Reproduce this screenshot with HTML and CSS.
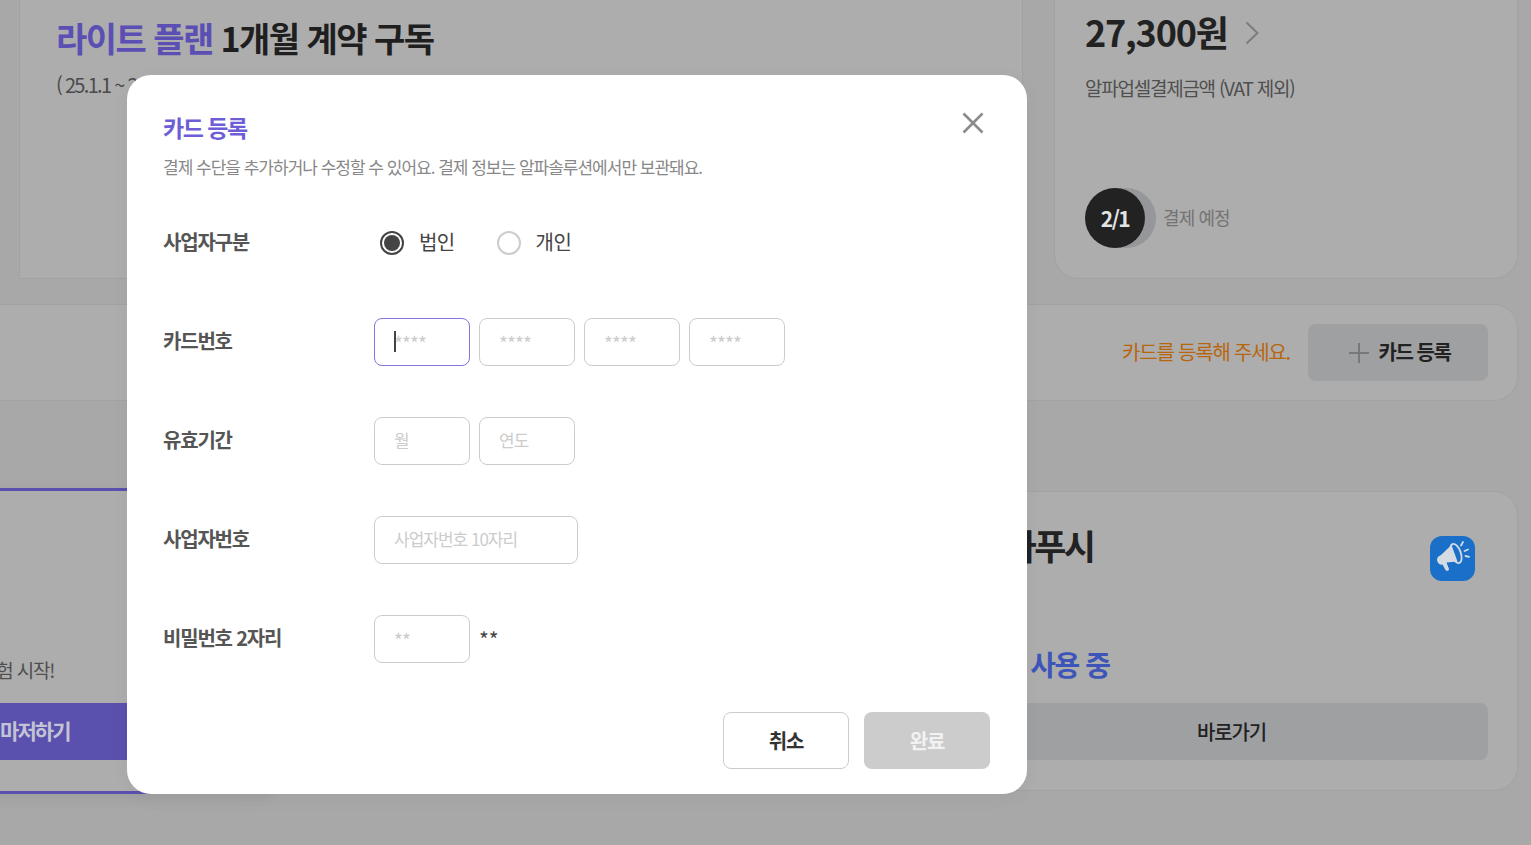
FILE: index.html
```html
<!DOCTYPE html>
<html lang="ko">
<head>
    <meta charset="UTF-8">
    <meta name="viewport" content="width=device-width, initial-scale=1.0">
    <title>카드 등록</title>
    <link rel="stylesheet" href="styles.css">
</head>
<body>
    <!-- Dimmed page behind the modal -->
    <div class="page">
        <div class="top-row">
            <div class="card plan-card">
                <h1 class="plan-title"><span class="plan-name">라이트 플랜</span> 1개월 계약 구독</h1>
                <p class="plan-period">( 25.1.1 ~ 25.1.31 )</p>
            </div>
            <div class="card amount-card">
                <div class="amount-row">
                    <span class="amount">27,300원</span>
                    <svg class="chevron" width="16" height="26" viewBox="0 0 16 26" fill="none">
                        <path d="M2.5 2.5 L13.5 13 L2.5 23.5" stroke="#7d7d7d" stroke-width="2"/>
                    </svg>
                </div>
                <p class="amount-note">알파업셀결제금액 (VAT 제외)</p>
                <div class="due-row">
                    <div class="due-date">2/1</div>
                    <span class="due-label">결제 예정</span>
                </div>
            </div>
        </div>

        <div class="card payment-card">
            <span class="payment-note">카드를 등록해 주세요.</span>
            <div class="gray-btn add-card-btn">
                <svg width="20" height="20" viewBox="0 0 20 20" fill="none">
                    <path d="M10 0 V20 M0 10 H20" stroke="#787878" stroke-width="2"/>
                </svg>
                <span class="add-card-text">카드 등록</span>
            </div>
        </div>

        <div class="bottom-row">
            <div class="card trial-card">
                <p class="trial-text">체험 시작!</p>
                <div class="trial-btn">마저하기</div>
            </div>
            <div class="card push-card">
                <div class="push-head">
                    <span class="push-title">알파푸시</span>
                    <div class="push-icon">
                        <svg width="45" height="45" viewBox="0 0 45 45" fill="none">
                            <ellipse cx="26" cy="17.5" rx="4.8" ry="10" transform="rotate(-20 26 17.5)" stroke="#d5dbe3" stroke-width="1.8"/>
                            <path d="M7 24 C7 21 9 20 11 19 L21.5 9 L27.5 25.5 L16.5 26.5 L19 33 C19 35 16.5 35.5 15.5 34 L12.5 28.5 C9.5 29.5 7.5 27 7 24 Z" fill="#d5dbe3"/>
                            <path d="M31 9.5 L33 6 M34.5 15 L38 13.5 M35.5 20 L39 20.8" stroke="#d5dbe3" stroke-width="1.8" stroke-linecap="round"/>
                        </svg>
                    </div>
                </div>
                <div class="push-status">무료 사용 중</div>
                <div class="gray-btn push-link">바로가기</div>
            </div>
        </div>
    </div>

    <!-- Card registration modal -->
    <div class="modal">
        <div class="modal-head">
            <div>
                <h2 class="modal-title">카드 등록</h2>
                <p class="modal-desc">결제 수단을 추가하거나 수정할 수 있어요. 결제 정보는 알파솔루션에서만 보관돼요.</p>
            </div>
            <svg class="close-icon" width="22" height="22" viewBox="0 0 22 22" fill="none">
                <path d="M1.5 1.5 L20.5 20.5 M20.5 1.5 L1.5 20.5" stroke="#8c8c8c" stroke-width="2.6"/>
            </svg>
        </div>

        <div class="form-row radio-row">
            <div class="form-label">사업자구분</div>
            <div class="radio-group">
                <div class="radio-item">
                    <span class="radio checked"></span>
                    <span class="radio-text">법인</span>
                </div>
                <div class="radio-item">
                    <span class="radio"></span>
                    <span class="radio-text">개인</span>
                </div>
            </div>
        </div>

        <div class="form-row">
            <div class="form-label">카드번호</div>
            <div class="field-group">
                <div class="field focused">
                    <input class="stars" type="text" placeholder="****">
                    <span class="caret"></span>
                </div>
                <div class="field"><input class="stars" type="text" placeholder="****"></div>
                <div class="field"><input class="stars" type="text" placeholder="****"></div>
                <div class="field"><input class="stars" type="text" placeholder="****"></div>
            </div>
        </div>

        <div class="form-row">
            <div class="form-label">유효기간</div>
            <div class="field-group">
                <div class="field"><input type="text" placeholder="월"></div>
                <div class="field"><input type="text" placeholder="연도"></div>
            </div>
        </div>

        <div class="form-row">
            <div class="form-label">사업자번호</div>
            <div class="field-group">
                <div class="field wide"><input type="text" placeholder="사업자번호 10자리"></div>
            </div>
        </div>

        <div class="form-row last-row">
            <div class="form-label">비밀번호 2자리</div>
            <div class="field-group">
                <div class="field"><input class="stars" type="text" placeholder="**"></div>
                <span class="pw-stars">**</span>
            </div>
        </div>

        <div class="modal-actions">
            <div class="modal-btn cancel-btn">취소</div>
            <div class="modal-btn done-btn">완료</div>
        </div>
    </div>
</body>
</html>
```

FILE: styles.css
```css
body {
    margin: 0;
    height: 845px;
    overflow: hidden;
    background-color: #a8a8a8;
    color: #222;
    font-family: 'Noto Sans CJK KR', 'Noto Sans', sans-serif;
}

h1, h2, p {
    margin: 0;
}

/* Dimmed page */
.page {
    margin-top: -40px;
    padding-right: 13px;
    display: flex;
    flex-direction: column;
}

.card {
    background-color: #adadad;
    border: 1px solid #a2a2a2;
    border-radius: 24px;
    box-sizing: border-box;
}

.top-row {
    display: flex;
    gap: 31px;
    height: 319px;
    padding-left: 19px;
}

.plan-card {
    width: 1004px;
    padding: 52px 36px 0;
    border-radius: 0;
    border-top: none;
}

.plan-title {
    font-size: 34px;
    line-height: 52px;
    font-weight: 700;
    letter-spacing: -1.55px;
    color: #1f1f1f;
}

.plan-name {
    color: #5b4fb4;
}

.plan-period {
    margin-top: 5px;
    font-size: 20px;
    line-height: 32px;
    letter-spacing: -1.7px;
    color: #4a4a4a;
}

.amount-card {
    flex: 1;
    padding: 46px 30px 0;
    border-top: none;
    border-radius: 0 0 24px 24px;
}

.amount-row {
    display: flex;
    align-items: center;
    gap: 16px;
    height: 50px;
}

.chevron {
    margin-top: 3px;
}

.amount {
    font-size: 36px;
    font-weight: 700;
    letter-spacing: -1.2px;
    color: #222;
}

.amount-note {
    margin-top: 17px;
    font-size: 19px;
    line-height: 30px;
    letter-spacing: -1.25px;
    color: #4f4f4f;
}

.due-row {
    margin-top: 85px;
    display: flex;
    align-items: center;
    gap: 18px;
}

.due-date {
    width: 60px;
    height: 60px;
    border-radius: 50%;
    background-color: #222;
    box-shadow: 11px 0 0 #95979a;
    display: flex;
    align-items: center;
    justify-content: center;
    color: #e4e4e4;
    font-size: 21px;
    font-weight: 700;
    letter-spacing: -1.5px;
}

.due-label {
    margin-bottom: 2px;
    font-size: 18px;
    letter-spacing: -0.9px;
    color: #737373;
}

.payment-card {
    margin-top: 25px;
    margin-left: -30px;
    height: 97px;
    display: flex;
    align-items: center;
    justify-content: flex-end;
    padding-right: 29px;
}

.payment-note {
    margin-right: 18px;
    margin-bottom: 2px;
    font-size: 20px;
    letter-spacing: -1.2px;
    color: #b8660e;
}

.gray-btn {
    background-color: #9fa0a2;
    border-radius: 8px;
    display: flex;
    align-items: center;
    justify-content: center;
    font-size: 20px;
    color: #222;
}

.add-card-btn {
    width: 180px;
    height: 57px;
    padding-left: 4px;
    box-sizing: border-box;
    gap: 9px;
    font-weight: 700;
    letter-spacing: -1.4px;
}

.add-card-text {
    margin-bottom: 2px;
}

.bottom-row {
    margin-top: 87px;
    margin-left: -58px;
    display: flex;
    justify-content: space-between;
    align-items: center;
}

.trial-card {
    width: 338px;
    height: 306px;
    border: 3px solid #5a50ae;
    padding: 164px 35px 0;
    box-shadow: 0 6px 14px rgba(0, 0, 0, 0.05);
}

.trial-text {
    font-size: 19px;
    line-height: 30px;
    letter-spacing: -1.2px;
    color: #4f4f4f;
}

.trial-btn {
    margin-top: 18px;
    height: 57px;
    width: 400px;
    padding: 0 0 3px 20px;
    box-sizing: border-box;
    background-color: #5a50ae;
    display: flex;
    align-items: center;
    color: #c3c3d4;
    font-size: 21px;
    font-weight: 700;
    letter-spacing: -1.9px;
}

.push-card {
    width: 574px;
    height: 300px;
    padding: 0 29px 0 30px;
    display: flex;
    flex-direction: column;
}

.push-head {
    height: 132px;
    padding-right: 13px;
    display: flex;
    align-items: center;
    justify-content: space-between;
}

.push-title {
    margin-bottom: 28px;
    font-size: 35px;
    font-weight: 700;
    letter-spacing: -2.6px;
    color: #222;
}

.push-icon {
    width: 45px;
    height: 45px;
    border-radius: 12px;
    background-color: #1a70c8;
}

.push-status {
    margin-top: 18px;
    font-size: 28px;
    line-height: 44px;
    font-weight: 700;
    letter-spacing: -1.4px;
    color: #3d55b8;
}

.push-link {
    margin-top: 17px;
    height: 57px;
    font-weight: 500;
    letter-spacing: -1.2px;
}

/* Modal */
.modal {
    position: absolute;
    top: 75px;
    left: 127px;
    width: 900px;
    height: 719px;
    box-sizing: border-box;
    padding: 33px 37px 25px 36px;
    background-color: white;
    border-radius: 24px;
    box-shadow: 0 4px 20px rgba(0, 0, 0, 0.04);
    display: flex;
    flex-direction: column;
}

.modal-head {
    display: flex;
    justify-content: space-between;
    align-items: flex-start;
    height: 111px;
}

.close-icon {
    margin-top: 4px;
    margin-right: 6px;
}

.modal-title {
    font-size: 23px;
    line-height: 38px;
    font-weight: 700;
    letter-spacing: -1.5px;
    color: #6d5ed8;
}

.modal-desc {
    margin-top: 8px;
    font-size: 17px;
    line-height: 26px;
    letter-spacing: -1px;
    color: #888;
}

.form-row {
    display: flex;
    align-items: center;
    height: 48px;
    margin-bottom: 51px;
}

.form-row.last-row {
    margin-bottom: 0;
}

.form-label {
    width: 211px;
    margin-bottom: 3px;
    font-size: 20px;
    font-weight: 700;
    letter-spacing: -1.2px;
    color: #555;
}

.radio-group {
    display: flex;
    gap: 42px;
    padding-left: 6px;
}

.radio-item {
    display: flex;
    align-items: center;
    gap: 15px;
}

.radio {
    width: 24px;
    height: 24px;
    box-sizing: border-box;
    border: 2px solid #ccc;
    border-radius: 50%;
    display: flex;
    align-items: center;
    justify-content: center;
}

.radio.checked {
    border-color: #444;
}

.radio.checked::after {
    content: "";
    width: 16px;
    height: 16px;
    border-radius: 50%;
    background-color: #444;
}

.radio-text {
    margin-bottom: 4px;
    font-size: 20px;
    letter-spacing: -0.6px;
    color: #444;
}

.field-group {
    display: flex;
    align-items: center;
    gap: 9px;
}

.field {
    position: relative;
    width: 96px;
    height: 48px;
    box-sizing: border-box;
    border: 1px solid #ccc;
    border-radius: 8px;
}

.field.wide {
    width: 204px;
}

.field.focused {
    border-color: #8375dd;
}

.field input {
    width: 100%;
    height: 100%;
    box-sizing: border-box;
    padding: 0 0 3px 19px;
    border: none;
    outline: none;
    background: transparent;
    font-family: inherit;
    font-size: 17px;
    letter-spacing: -1px;
}

.field input.stars {
    padding-bottom: 0;
    font-size: 19px;
    letter-spacing: -0.9px;
}

.field input::placeholder {
    color: #ccc;
    opacity: 1;
}

.caret {
    position: absolute;
    top: 12px;
    left: 19px;
    width: 2px;
    height: 21px;
    background-color: #444;
}

.pw-stars {
    font-size: 21px;
    color: #444;
}

.modal-actions {
    margin-top: auto;
    display: flex;
    justify-content: flex-end;
    gap: 15px;
}

.modal-btn {
    width: 126px;
    height: 57px;
    box-sizing: border-box;
    border-radius: 8px;
    display: flex;
    align-items: center;
    justify-content: center;
    font-size: 20px;
    font-weight: 700;
    letter-spacing: -1.2px;
}

.cancel-btn {
    border: 1px solid #ccc;
    color: #333;
}

.done-btn {
    background-color: #ccc;
    color: #f2f2f2;
}
```
